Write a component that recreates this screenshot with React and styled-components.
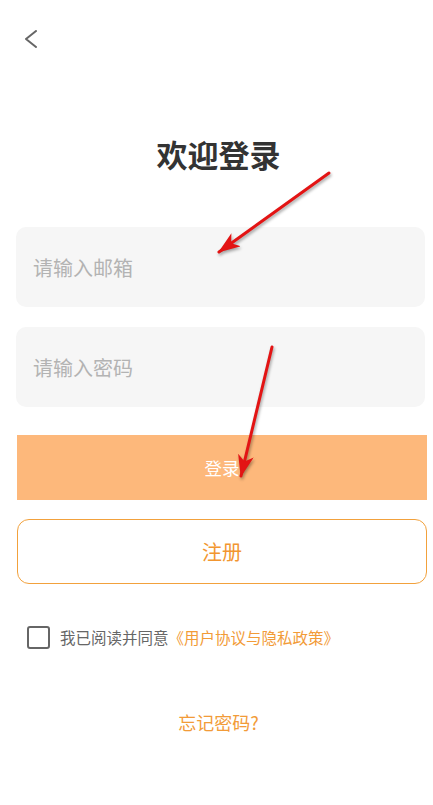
import React from "react";
import styled, { createGlobalStyle } from "styled-components";

const GlobalStyle = createGlobalStyle`
  html, body {
    margin: 0;
    padding: 0;
    background: #ffffff;
  }
  * {
    box-sizing: border-box;
  }
`;

const Page = styled.div`
  position: relative;
  min-height: 805px;
  background: #ffffff;
  font-family: "Noto Sans CJK SC", "Noto Sans", sans-serif;
`;

const Header = styled.div`
  padding: 30px 0 0 24px;
  height: 48px;
`;

const BackButton = styled.button`
  display: block;
  padding: 0;
  border: none;
  background: none;
  width: 14px;
  height: 18px;
  cursor: pointer;
`;

const Title = styled.h1`
  margin: 85px 0 0;
  padding-left: 4px;
  text-align: center;
  font-size: 31px;
  line-height: 42px;
  font-weight: 700;
  color: #333333;
`;

const Form = styled.div`
  display: flex;
  flex-direction: column;
  padding: 0 8px 0 16px;
  margin-top: 52px;
`;

const Input = styled.input`
  display: block;
  width: 100%;
  height: 80px;
  margin-top: ${({ $mt }) => $mt || 0}px;
  padding: 0 17px;
  border: none;
  outline: none;
  border-radius: 10px;
  background: #f6f6f6;
  font-family: inherit;
  font-size: 20px;
  color: #333333;

  &::placeholder {
    color: #b3b3b3;
  }
`;

const Button = styled.button`
  display: flex;
  align-items: center;
  justify-content: center;
  width: calc(100% + 1px);
  margin-left: 1px;
  height: 65px;
  margin-top: ${({ $mt }) => $mt || 0}px;
  font-family: inherit;
  cursor: pointer;
  border-radius: ${({ $outline }) => ($outline ? "12px" : "0")};
  background: ${({ $outline }) => ($outline ? "#ffffff" : "#fdb87b")};
  border: ${({ $outline }) => ($outline ? "1.5px solid #f2a13c" : "none")};
  color: ${({ $outline }) => ($outline ? "#f29630" : "#ffffff")};
  font-size: ${({ $outline }) => ($outline ? "20px" : "17.5px")};
`;

const Agreement = styled.div`
  display: flex;
  align-items: center;
  gap: 10px;
  margin-top: 41px;
  padding-left: 27px;
  height: 24px;
`;

const CheckBox = styled.span`
  display: block;
  flex: none;
  width: 23px;
  height: 23px;
  border: 2px solid #666666;
  border-radius: 3px;
`;

const AgreeText = styled.span`
  font-size: 15.5px;
  line-height: 24px;
  color: #666666;
`;

const LinkText = styled.span`
  color: #f29b38;
`;

const Forgot = styled.div`
  margin-top: 60px;
  padding-left: 4px;
  text-align: center;
  font-size: 18px;
  line-height: 26px;
  color: #f29b38;
`;

const Overlay = styled.svg`
  position: absolute;
  top: 0;
  left: 0;
  width: 433px;
  height: 805px;
  pointer-events: none;
  filter: drop-shadow(1px 2px 1.5px rgba(0, 0, 0, 0.35));
`;

function Arrows() {
  return (
    <Overlay viewBox="0 0 433 805">
      <defs>
        <marker
          id="head"
          viewBox="0 0 22 16"
          refX="21"
          refY="8"
          markerWidth="22"
          markerHeight="16"
          markerUnits="userSpaceOnUse"
          orient="auto"
        >
          <path d="M0,0 L22,8 L0,16 L6,8 Z" fill="#e31414" />
        </marker>
      </defs>
      <line x1="329" y1="173" x2="219" y2="252" stroke="#e31414" strokeWidth="3" strokeLinecap="round" markerEnd="url(#head)" />
      <line x1="272" y1="347" x2="241" y2="476" stroke="#e31414" strokeWidth="3" strokeLinecap="round" markerEnd="url(#head)" />
    </Overlay>
  );
}

export default function App() {
  return (
    <Page>
      <GlobalStyle />
      <Header>
        <BackButton aria-label="返回">
          <svg width="14" height="18" viewBox="0 0 14 18" fill="none">
            <polyline points="12,1 2,9 12,17" stroke="#666666" strokeWidth="2" strokeLinecap="round" strokeLinejoin="round" />
          </svg>
        </BackButton>
      </Header>
      <Title>欢迎登录</Title>
      <Form>
        <Input placeholder="请输入邮箱" />
        <Input $mt={20} type="password" placeholder="请输入密码" />
        <Button $mt={28}>登录</Button>
        <Button $mt={19} $outline>注册</Button>
      </Form>
      <Agreement>
        <CheckBox />
        <AgreeText>
          我已阅读并同意<LinkText>《用户协议与隐私政策》</LinkText>
        </AgreeText>
      </Agreement>
      <Forgot>忘记密码?</Forgot>
      <Arrows />
    </Page>
  );
}
